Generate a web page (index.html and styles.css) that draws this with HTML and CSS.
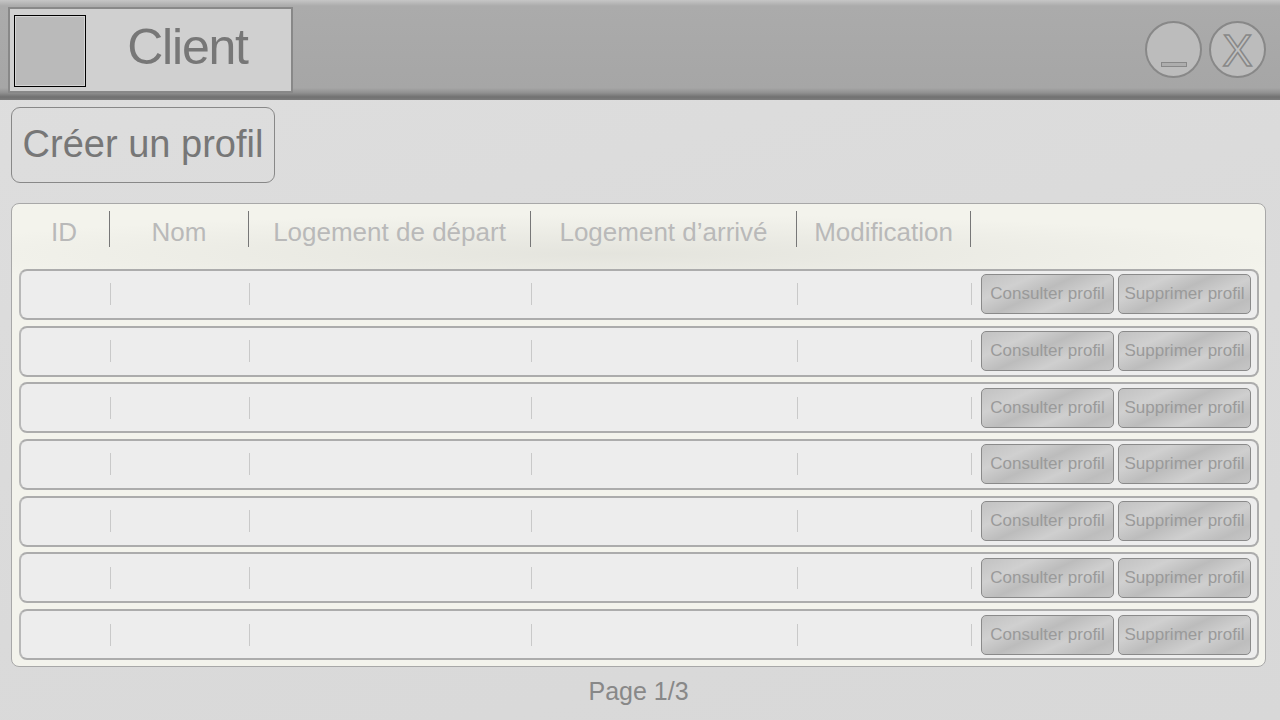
FILE: index.html
```html
<!DOCTYPE html>
<html lang="fr">
<head>
<meta charset="utf-8">
<title>Client</title>
<link rel="stylesheet" href="styles.css">
</head>
<body>
<header class="topbar">
  <div class="title-box">
    <div class="avatar"></div>
    <span class="title">Client</span>
  </div>
  <div class="win-btns">
    <div class="win-btn"><span class="min-bar"></span></div>
    <div class="win-btn"><span class="close-x">X</span></div>
  </div>
</header>
<main class="content">
  <button class="create-btn">Créer un profil</button>
  <section class="panel">
    <div class="thead">
      <div class="th">ID</div>
      <div class="th">Nom</div>
      <div class="th">Logement de départ</div>
      <div class="th">Logement d’arrivé</div>
      <div class="th">Modification</div>
      <div class="th-rest"></div>
    </div>
    <div class="rows">
      <div class="row"><div class="td"></div><div class="td"></div><div class="td"></div><div class="td"></div><div class="td"></div><div class="actions"><button class="act">Consulter profil</button><button class="act">Supprimer profil</button></div></div>
      <div class="row"><div class="td"></div><div class="td"></div><div class="td"></div><div class="td"></div><div class="td"></div><div class="actions"><button class="act">Consulter profil</button><button class="act">Supprimer profil</button></div></div>
      <div class="row"><div class="td"></div><div class="td"></div><div class="td"></div><div class="td"></div><div class="td"></div><div class="actions"><button class="act">Consulter profil</button><button class="act">Supprimer profil</button></div></div>
      <div class="row"><div class="td"></div><div class="td"></div><div class="td"></div><div class="td"></div><div class="td"></div><div class="actions"><button class="act">Consulter profil</button><button class="act">Supprimer profil</button></div></div>
      <div class="row"><div class="td"></div><div class="td"></div><div class="td"></div><div class="td"></div><div class="td"></div><div class="actions"><button class="act">Consulter profil</button><button class="act">Supprimer profil</button></div></div>
      <div class="row"><div class="td"></div><div class="td"></div><div class="td"></div><div class="td"></div><div class="td"></div><div class="actions"><button class="act">Consulter profil</button><button class="act">Supprimer profil</button></div></div>
      <div class="row"><div class="td"></div><div class="td"></div><div class="td"></div><div class="td"></div><div class="td"></div><div class="actions"><button class="act">Consulter profil</button><button class="act">Supprimer profil</button></div></div>
    </div>
  </section>
  <div class="pager">Page 1/3</div>
</main>
</body>
</html>
```
FILE: styles.css
```css
* { box-sizing: border-box; }
html, body {
  margin: 0;
  padding: 0;
  width: 1280px;
  height: 720px;
  overflow: hidden;
}
body {
  font-family: "Liberation Sans", Arial, sans-serif;
  background: linear-gradient(165deg, #dedede 0%, #dadada 60%, #d8d8d8 100%);
}
.topbar {
  height: 100px;
  display: flex;
  align-items: flex-start;
  justify-content: space-between;
  padding: 7px 14px 0 8px;
  background: linear-gradient(to bottom, #c6c6c6 0px, #ababab 6px, #a6a6a6 88px, #8f8f8f 93px, #717171 97px, #7c7c7c 100px);
}
.title-box {
  width: 285px;
  height: 86px;
  border: 2px solid #888;
  background: #d0d0d0;
  display: flex;
  align-items: flex-start;
  padding: 6px 0 0 4px;
}
.avatar {
  width: 72px;
  height: 72px;
  border: 1px solid #000;
  background: #bababa;
  box-shadow: inset 0 0 0 1px #d4d4d4;
}
.title {
  flex: 1;
  text-align: center;
  font-size: 50px;
  letter-spacing: -1.2px;
  color: #777;
  line-height: 64px;
  padding-right: 2px;
}
.win-btns {
  display: flex;
  gap: 7px;
  margin-top: 14px;
}
.win-btn {
  width: 57px;
  height: 57px;
  border-radius: 50%;
  border: 2px solid #888;
  background: #bcbcbc;
  display: flex;
  align-items: center;
  justify-content: center;
  position: relative;
}
.min-bar {
  position: absolute;
  left: 14px;
  top: 39px;
  width: 26px;
  height: 5px;
  border: 1px solid #888;
  background: #adadad;
}
.close-x {
  font-size: 45px;
  line-height: 45px;
  color: #c0c0c0;
  -webkit-text-stroke: 1.5px #888;
  margin-top: 2px;
}
.content {
  padding: 7px 0 0 11px;
}
.create-btn {
  display: block;
  width: 264px;
  height: 76px;
  border: 1px solid #888;
  border-radius: 9px;
  background: transparent;
  font-family: "Liberation Sans", Arial, sans-serif;
  font-size: 38px;
  color: #777;
  padding: 0 0 2px 0;
  text-align: center;
  white-space: nowrap;
}
.panel {
  margin-top: 20px;
  width: 1255px;
  height: 464px;
  border: 1px solid #a8a8a8;
  border-radius: 8px;
  background:
    radial-gradient(ellipse 700px 40px at 600px 50px, rgba(200,200,194,0.35), rgba(200,200,194,0) 100%),
    #f3f3ec;
  padding: 0 6px 6px 7px;
  display: flex;
  flex-direction: column;
}
.thead {
  height: 65px;
  display: grid;
  grid-template-columns: 91px 139px 282px 266px 174px 1fr;
  align-items: start;
  padding-top: 7px;
}
.th {
  height: 36px;
  border-right: 1px solid #777;
  text-align: center;
  font-size: 26px;
  line-height: 42px;
  color: #b9b9b9;
  white-space: nowrap;
}
.rows {
  display: flex;
  flex-direction: column;
  gap: 5.7px;
}
.row {
  height: 51px;
  border: 2px solid #acacac;
  border-left-color: #b8b8b8;
  border-radius: 8px;
  background: #ededed;
  display: grid;
  grid-template-columns: 90px 139px 282px 266px 174px 1fr;
  align-items: center;
}
.td {
  height: 22px;
  border-right: 1px solid #c9c9c9;
}
.actions {
  display: flex;
  gap: 4px;
  padding-left: 9px;
}
.act {
  width: 133px;
  height: 40px;
  border: 1px solid #8a8a8a;
  border-radius: 5px;
  background: linear-gradient(155deg, #c2c2c2 0%, #d0d0d0 25%, #bcbcbc 45%, #cfcfcf 65%, #bdbdbd 85%, #c6c6c6 100%);
  font-family: "Liberation Sans", Arial, sans-serif;
  font-size: 17px;
  color: #9a9a9a;
  padding: 0;
  white-space: nowrap;
  text-align: center;
}
.pager {
  width: 1255px;
  text-align: center;
  margin-top: 9px;
  font-size: 25px;
  line-height: 30px;
  color: #888;
}
```
